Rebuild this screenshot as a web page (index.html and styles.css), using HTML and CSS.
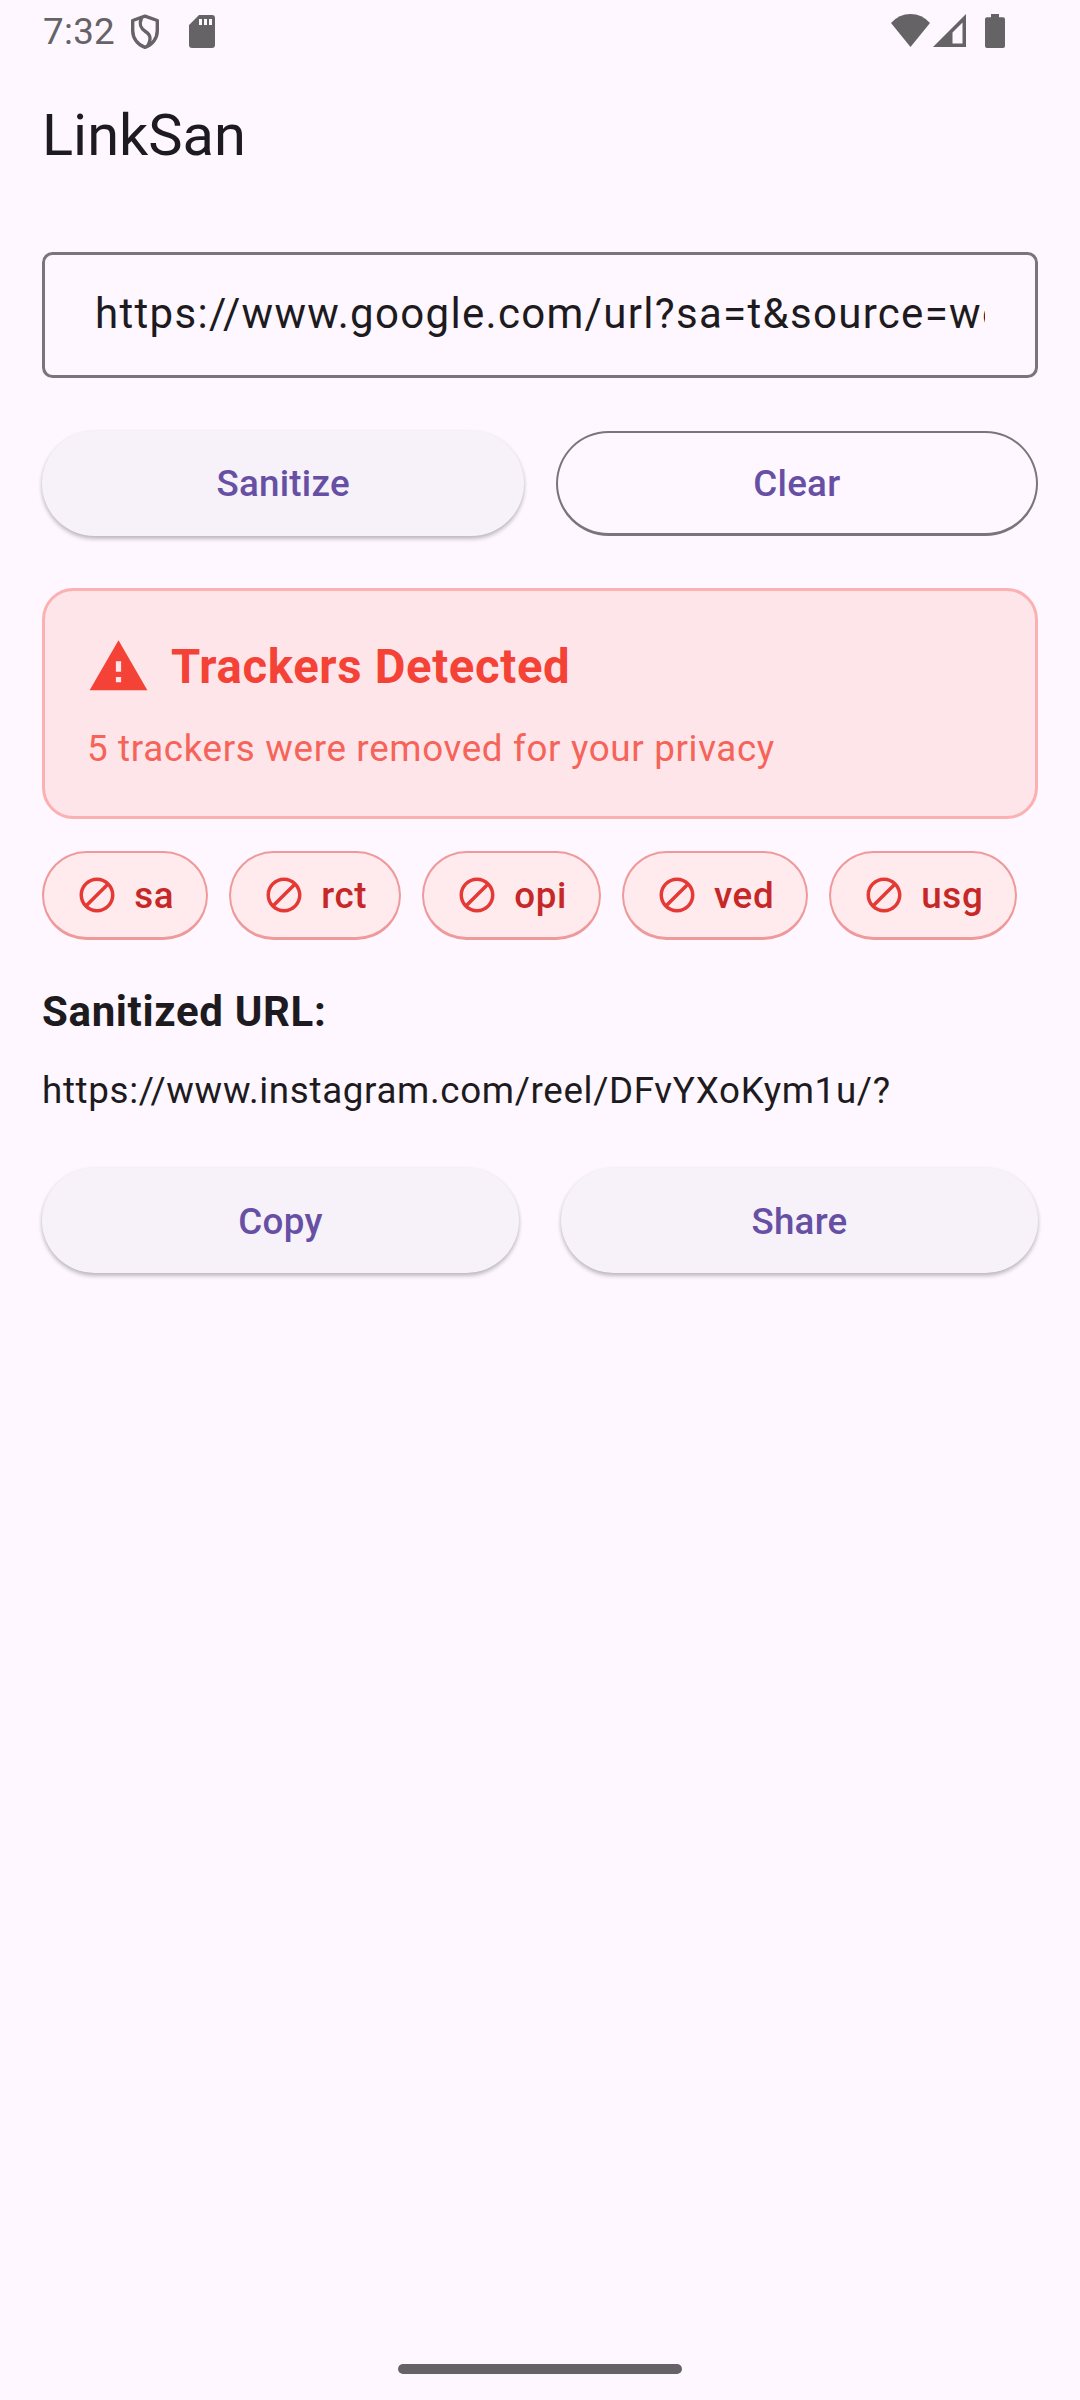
FILE: index.html
```html
<!DOCTYPE html>
<html lang="en">
<head>
<meta charset="utf-8">
<title>LinkSan</title>
<link rel="stylesheet" href="styles.css">
</head>
<body>
<svg class="defs" aria-hidden="true">
  <symbol id="block" viewBox="0 0 24 24"><path d="M12 2C6.48 2 2 6.48 2 12s4.48 10 10 10 10-4.480 10-10S17.520 2 12 2zM4 12c0-4.420 3.580-8 8-8 1.850 0 3.550.63 4.900 1.690L5.690 16.900C4.630 15.550 4 13.850 4 12zm8 8c-1.850 0-3.550-.63-4.900-1.690L18.310 7.100C19.370 8.450 20 10.150 20 12c0 4.420-3.580 8-8 8z"/></symbol>
</svg>
<div class="screen">
  <header class="status">
    <span class="time">7:32</span>
    <svg class="shield" viewBox="0 0 30 36" fill="none" stroke="currentColor" stroke-width="3.4" stroke-linejoin="round"><path d="M15 2.200L27.300 6.500V16.500C27.300 24.500 22.200 31 15 33.400C7.800 31 2.700 24.500 2.700 16.500V6.500Z"/><path d="M11.500 4C8.500 11 11 14.500 15.500 17.500C20.500 20.500 21.500 24.500 18 31.500"/></svg>
    <svg class="sd" viewBox="0 0 26 33"><path fill-rule="evenodd" d="M10 0H23Q26 0 26 3V30Q26 33 23 33H3Q0 33 0 30V10ZM10 4V10H13V4ZM15 4V10H18V4ZM20 4V10H23V4Z"/></svg>
    <span class="spacer"></span>
    <svg class="wifi" viewBox="0 0 39 33"><path d="M19.500 33L0 9Q8 0 19.500 0T39 9Z"/></svg>
    <svg class="signal" viewBox="0 0 33 33"><path fill-rule="evenodd" d="M33 0V33H0ZM29.500 8.500L19.500 18.500V29.500H29.500Z"/></svg>
    <svg class="battery" viewBox="0 0 20 34"><path d="M6 0H14V3.300H18Q20 3.300 20 5.300V32Q20 34 18 34H2Q0 34 0 32V5.300Q0 3.300 2 3.300H6Z"/></svg>
  </header>
  <h1 class="title">LinkSan</h1>
  <main class="content">
    <div class="field"><div class="value">https://www.google.com/url?sa=t&amp;source=web</div></div>
    <div class="actions">
      <button class="btn raised">Sanitize</button>
      <button class="btn outlined">Clear</button>
    </div>
    <section class="alert">
      <div class="alert-head">
        <svg class="warning" viewBox="0 0 24 24"><path d="M1 21h22L12 2 1 21zm12-3h-2v-2h2v2zm0-4h-2v-4h2v4z"/></svg>
        <h2 class="alert-title">Trackers Detected</h2>
      </div>
      <p class="alert-text">5 trackers were removed for your privacy</p>
    </section>
    <div class="chips">
      <span class="chip"><svg class="block"><use href="#block"/></svg>sa</span>
      <span class="chip"><svg class="block"><use href="#block"/></svg>rct</span>
      <span class="chip"><svg class="block"><use href="#block"/></svg>opi</span>
      <span class="chip"><svg class="block"><use href="#block"/></svg>ved</span>
      <span class="chip"><svg class="block"><use href="#block"/></svg>usg</span>
    </div>
    <h3 class="label">Sanitized URL:</h3>
    <p class="url">https://www.instagram.com/reel/DFvYXoKym1u/?</p>
    <div class="actions wide">
      <button class="btn raised">Copy</button>
      <button class="btn raised">Share</button>
    </div>
  </main>
  <div class="home"></div>
</div>
</body>
</html>
```
FILE: styles.css
```css
* { box-sizing: border-box; margin: 0; padding: 0; }
body { background: #fef7ff; color: #1d1b20; font-family: Roboto, "Noto Sans", sans-serif; }
svg { display: block; flex: none; fill: currentColor; }
.defs { display: none; }
.screen { width: 1080px; height: 2400px; display: flex; flex-direction: column; }

.status { height: 63px; padding: 0 75px 0 43px; display: flex; align-items: center; color: #666367; }
.time { font-size: 36.75px; line-height: 43px; width: 72px; letter-spacing: .3px; }
.shield { width: 30px; height: 36px; margin-left: 14.500px; fill: none; }
.sd { width: 26px; height: 33px; margin-left: 29.500px; }
.spacer { flex: 1; }
.wifi { width: 39px; height: 33px; margin-bottom: 2px; }
.signal { width: 33px; height: 33px; margin: 0 19px 2px 3px; }
.battery { width: 20px; height: 34px; margin-bottom: 1px; }

.title { height: 147px; padding-left: 42px; font-size: 57.750px; font-weight: 400; line-height: 145px; }
.content { padding: 42px 42px 0; display: flex; flex-direction: column; flex: 1; }

.field { height: 126px; border: 3px solid #79747e; border-radius: 10.500px; padding: 0 50px; }
.value { height: 120px; line-height: 117px; font-size: 42px; letter-spacing: 1.3125px; white-space: nowrap; overflow: hidden; }

.actions { display: grid; grid-template-columns: 1fr 1fr; gap: 31.500px; margin-top: 52.500px; }
.btn { height: 105px; border: 0; border-radius: 52.500px; font: 500 36.750px/43px Roboto, sans-serif; letter-spacing: .2625px; color: #6750a4; background: none; }
.raised { background: #f7f2fa; box-shadow: 0 3px 4px rgba(0, 0, 0, .22), 0 1px 4px rgba(0, 0, 0, .08); }
.outlined { border: solid #79747e; border-width: 2px 2px 3px; padding-top: 1px; }

.alert { margin-top: 52.500px; height: 231px; border: 3px solid #fbb1b1; border-radius: 31.500px; background: #fee5e9; padding: 44px 42px; color: #f44336; }
.alert-head { display: flex; align-items: center; gap: 21px; height: 63px; }
.warning { width: 63px; height: 63px; }
.alert-title { font-size: 47.250px; line-height: 63px; padding-top: 1px; font-weight: 700; letter-spacing: .656px; }
.alert-text { margin-top: 24px; font-size: 36.750px; line-height: 53px; letter-spacing: .656px; opacity: .8; }

.chips { display: flex; gap: 21px; margin-top: 31.500px; }
.chip { height: 89px; display: flex; align-items: center; padding: 1px 31.700px 0 32.100px; border: solid #ef9a9a; border-width: 2px 2px 3px; border-radius: 44.500px; background: #ffebee; color: #c62828; font-size: 36.750px; font-weight: 500; letter-spacing: .656px; }
.block { width: 42px; height: 42px; margin-right: 16.150px; color: #e53935; }

.label { margin-top: 42px; font-size: 42px; line-height: 60px; font-weight: 700; letter-spacing: .656px; }
.url { margin-top: 22px; font-size: 36.750px; line-height: 53px; letter-spacing: .656px; }
.wide { gap: 42px; margin-top: 51px; }
.wide .btn { padding-top: 2px; }

.home { width: 284px; height: 10px; margin: 0 auto 26px; border-radius: 5px; background: #666367; }
```
